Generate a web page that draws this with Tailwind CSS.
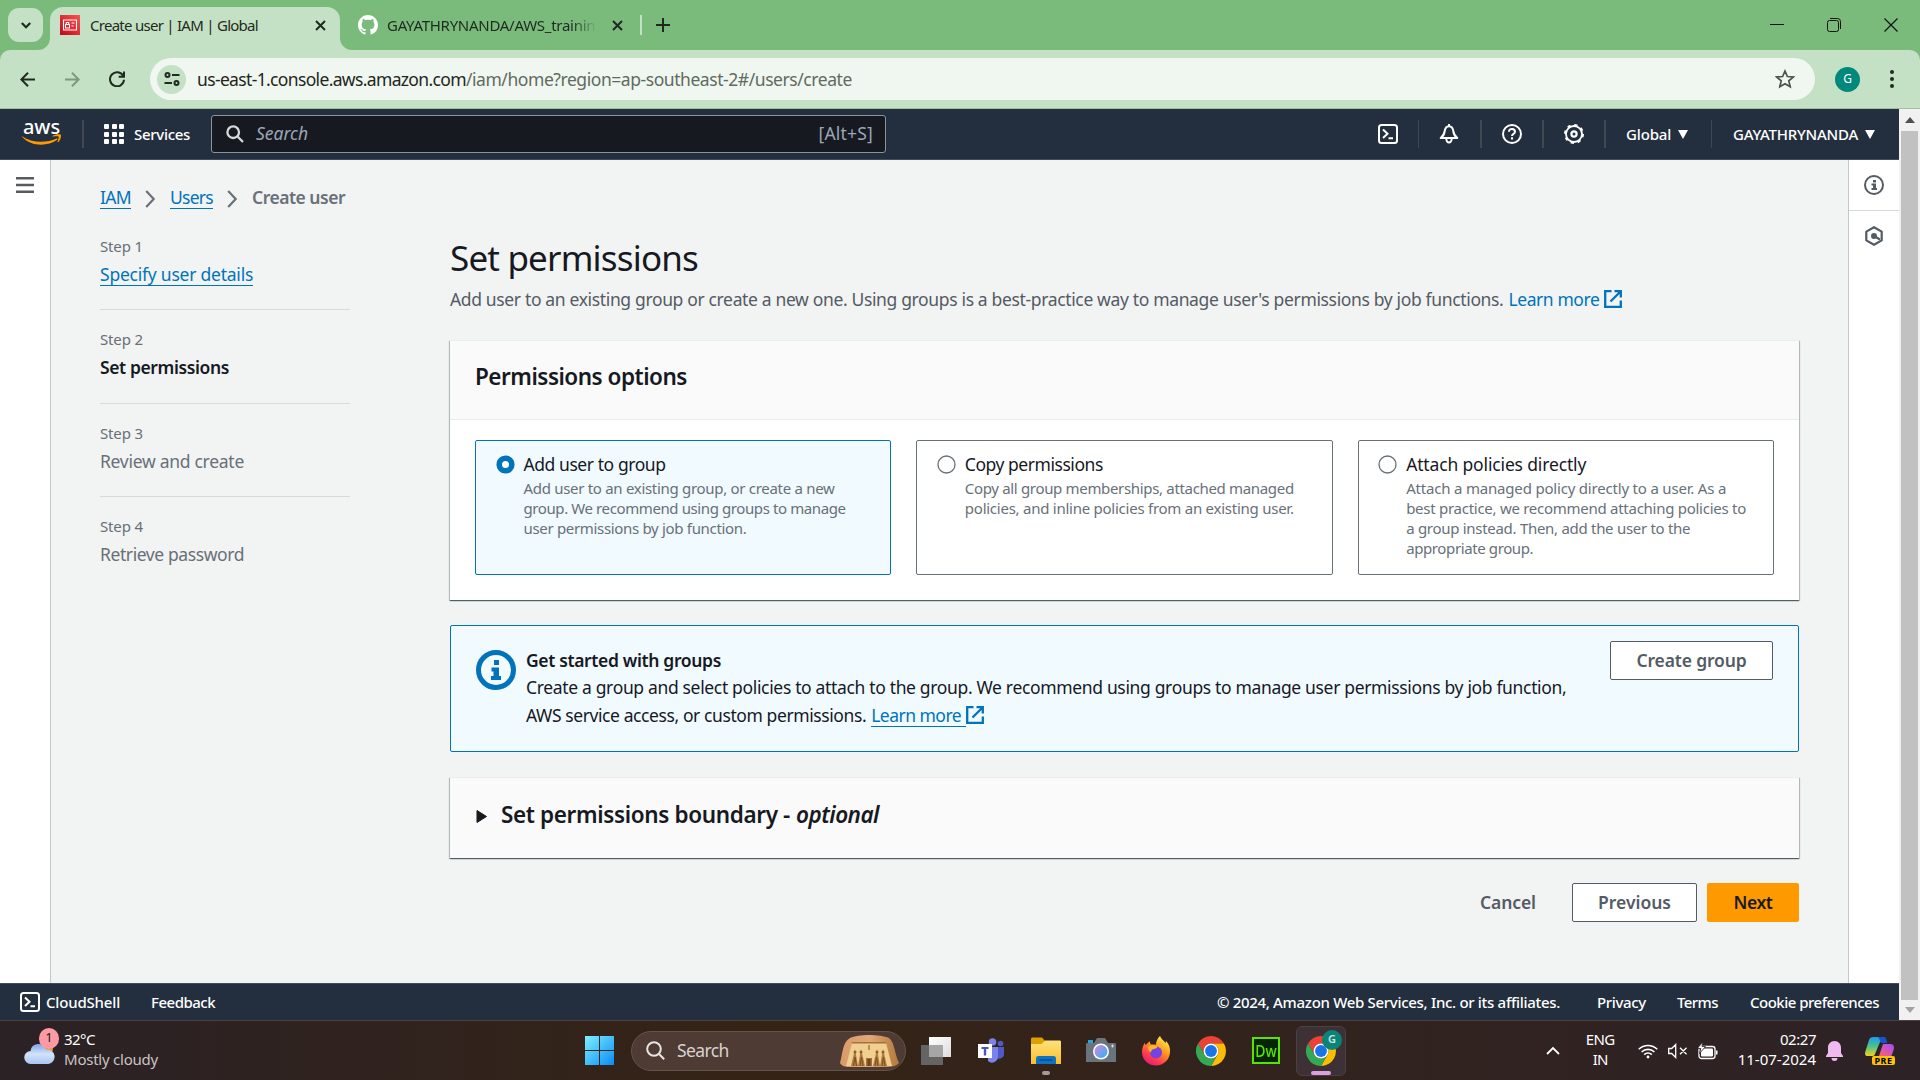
<!DOCTYPE html>
<html lang="en">
<head>
<meta charset="utf-8">
<title>Create user | IAM | Global</title>
<script src="https://cdn.jsdelivr.net/npm/@tailwindcss/browser@4"></script>
</head>
<body class="w-[1920px] h-[1080px] overflow-hidden flex flex-col bg-[#c5e1c5] font-['Noto_Sans','Open_Sans',sans-serif] text-[#16191f] whitespace-nowrap">

<!-- Tab strip -->
<div class="h-[50px] shrink-0 bg-[#7abb7c] flex items-end text-[#1f2a20] text-[15px]">
  <div class="w-[50px] h-[50px] relative flex items-center pl-2">
    <div class="w-[35px] h-[34px] rounded-[11px] bg-[#c5e1c5] flex items-center justify-center">
      <svg class="size-[12px]" viewBox="0 0 12 12" fill="none" stroke="#1f2a20" stroke-width="2.2"><path d="M1.8 4l4.2 4.2L10.2 4"/></svg>
    </div>
    <svg class="absolute right-0 bottom-0 size-3" viewBox="0 0 12 12"><path d="M12 0v12H0A12 12 0 0 0 12 0z" fill="#c5e1c5"/></svg>
  </div>
  <div class="w-[290px] h-[43px] rounded-t-[13px] bg-[#c5e1c5] flex items-center pl-2.5 pr-[14px] pb-[7px]">
    <svg class="size-5" viewBox="0 0 20 20"><defs><linearGradient id="iam" x1="0" y1="1" x2="1" y2="0"><stop offset="0" stop-color="#bd0816"/><stop offset="1" stop-color="#ff5252"/></linearGradient></defs><path fill="url(#iam)" d="M0 0h20v20H0z"/><g fill="none" stroke="#fff" stroke-width="1.1"><path d="M3.500 5h13v10h-13z"/><path d="M5.500 13V9.500h4V13zM6.300 9.500V7.500h2.400v2M11.500 8h3M11.500 11h2"/></g></svg>
    <span class="ml-[10px] tracking-[-0.73px]">Create user | IAM | Global</span>
    <svg class="ml-auto size-[11px]" viewBox="0 0 11 11" stroke="#1f2a20" stroke-width="2"><path d="M1 1l9 9M10 1l-9 9"/></svg>
  </div>
  <div class="h-[50px] flex items-center relative pl-[18px]">
    <svg class="absolute left-0 bottom-0 size-3" viewBox="0 0 12 12"><path d="M0 0v12h12A12 12 0 0 1 0 0z" fill="#c5e1c5"/></svg>
    <svg class="size-5" viewBox="0 0 16 16" fill="#fff"><path d="M8 0C3.580 0 0 3.580 0 8c0 3.540 2.290 6.530 5.470 7.590.4.070.55-.17.55-.38 0-.19-.010-.82-.010-1.490-2.010.37-2.530-.49-2.690-.94-.090-.23-.48-.94-.82-1.130-.28-.15-.68-.52-.010-.53.63-.010 1.080.58 1.230.82.72 1.210 1.870.87 2.330.66.070-.52.28-.87.51-1.070-1.780-.2-3.640-.89-3.640-3.950 0-.87.31-1.590.82-2.150-.080-.2-.36-1.020.080-2.120 0 0 .67-.21 2.200.82.64-.18 1.320-.27 2-.27s1.360.090 2 .27c1.530-1.040 2.200-.82 2.200-.82.44 1.100.16 1.920.080 2.120.51.56.82 1.270.82 2.150 0 3.070-1.870 3.750-3.650 3.950.29.25.54.73.54 1.480 0 1.070-.010 1.930-.010 2.200 0 .21.15.46.55.38A8.010 8.010 0 0 0 16 8c0-4.420-3.580-8-8-8z"/></svg>
    <div class="ml-[9px] w-[210px] overflow-hidden tracking-[-0.27px] [mask-image:linear-gradient(to_right,#000_88%,transparent)]">GAYATHRYNANDA/AWS_training</div>
    <svg class="ml-[15px] size-[11px]" viewBox="0 0 11 11" stroke="#1f2a20" stroke-width="2"><path d="M1 1l9 9M10 1l-9 9"/></svg>
    <div class="ml-[17px] w-[2px] h-5 bg-[#c5e1c5]"></div>
    <svg class="ml-[14px] size-[14px]" viewBox="0 0 14 14" stroke="#1f2a20" stroke-width="2"><path d="M7 0v14M0 7h14"/></svg>
  </div>
  <div class="ml-auto h-[50px] flex items-center gap-[43px] pr-[22px]">
    <svg class="size-[14px]" viewBox="0 0 14 14" stroke="#111"><path d="M0 6.500h14"/></svg>
    <svg class="size-[14px]" viewBox="0 0 14 14" fill="none" stroke="#111"><rect x=".5" y="2.500" width="11" height="11" rx="2"/><path d="M3 .5h7.500a3 3 0 0 1 3 3V11"/></svg>
    <svg class="size-[14px]" viewBox="0 0 14 14" stroke="#111" stroke-width="1.200"><path d="M.5.5l13 13M13.500.5l-13 13"/></svg>
  </div>
</div>

<!-- Address bar -->
<div class="h-[59px] shrink-0 bg-[#7abb7c]">
<div class="h-full rounded-t-[10px] border-b border-[#9fbfa0] bg-[#c5e1c5] flex items-center pl-5">
  <svg class="size-[15px]" viewBox="0 0 15 15" fill="none" stroke="#1f2a20" stroke-width="2"><path d="M15 7.500H1.500M8 .8L1.300 7.500 8 14.200"/></svg>
  <svg class="ml-[30px] size-[15px]" viewBox="0 0 15 15" fill="none" stroke="#7f9780" stroke-width="2"><path d="M0 7.500h13.500M7 .8l6.700 6.700L7 14.200"/></svg>
  <svg class="ml-[29px] size-4" viewBox="0 0 16 16" fill="none" stroke="#1f2a20" stroke-width="2"><path d="M14.200 5A7 7 0 1 0 15 8.800"/><path d="M15 .5v5.300H9.700"/></svg>
  <div class="ml-[25px] w-[1665px] h-[42px] rounded-full bg-[#f0f7f0] flex items-center pl-[7px] pr-[20px]">
    <div class="size-[29px] rounded-full bg-[#c5e1c5] flex items-center justify-center">
      <svg class="size-4" viewBox="0 0 16 16" fill="none" stroke="#1f2a20" stroke-width="2"><circle cx="3.500" cy="4" r="2"/><path d="M8 4h7.500M.5 12H8"/><circle cx="12.500" cy="12" r="2"/></svg>
    </div>
    <div class="ml-[11px] text-[17.5px] text-[#1f2620]"><span class="tracking-[-0.65px]">us-east-1.console.aws.amazon.com</span><span class="text-[#5f6b60] tracking-[-0.44px]">/iam/home?region=ap-southeast-2#/users/create</span></div>
    <svg class="ml-auto size-5" viewBox="0 0 20 20" fill="none" stroke="#4a544b" stroke-width="1.700"><path d="M10 2l2.400 5.500 6 .5-4.600 3.900 1.400 5.900L10 14.700l-5.200 3.100 1.400-5.900L1.600 8l6-.5z"/></svg>
  </div>
  <div class="ml-[20px] size-[25px] rounded-full bg-[#00897b] text-white text-[12px] flex items-center justify-center">G</div>
  <svg class="ml-[30px] w-1 h-[18px]" viewBox="0 0 4 18" fill="#1f2a20"><circle cx="2" cy="2" r="2"/><circle cx="2" cy="9" r="2"/><circle cx="2" cy="16" r="2"/></svg>
</div>
</div>

<div class="h-[911px] shrink-0 flex">
<div class="w-[1899px] flex flex-col">

  <!-- AWS navigation -->
  <div class="h-[51px] shrink-0 bg-[#232f3e] border-b border-[#414d5c] flex items-center pl-[22px] text-white text-[15px] font-medium">
    <div class="w-10 h-[29px] relative">
      <span class="absolute left-[1px] -top-[7px] text-[20px] leading-[28px] font-medium tracking-[-0.1px]">aws</span>
      <svg class="absolute left-0 top-[14px] w-10 h-3" viewBox="0 0 40 12" fill="#ff9900"><path d="M0 2.200c10 7 24 7 34.500 2.300 1-.3 1.500.6.700 1.300C25 13 9 12.500.2 3 0 2.700-.2 2.200 0 2.200z"/><path d="M30.500 2c2-1.800 7.500-2.200 8.300-1.300.8 1-.3 6-2.800 7.500-.4.200-.8 0-.6-.5.600-1.300 1.700-4.300 1.200-5-.5-.6-3.600-.3-5.500-.1-.6 0-.9-.3-.6-.6z"/></svg>
    </div>
    <div class="ml-5 w-[2px] h-7 bg-[#414750]"></div>
    <div class="ml-5 grid grid-cols-3 gap-x-[2.5px] gap-y-[2.5px] w-5">
      <i class="size-[5px] rounded-[1px] bg-white"></i><i class="size-[5px] rounded-[1px] bg-white"></i><i class="size-[5px] rounded-[1px] bg-white"></i><i class="size-[5px] rounded-[1px] bg-white"></i><i class="size-[5px] rounded-[1px] bg-white"></i><i class="size-[5px] rounded-[1px] bg-white"></i><i class="size-[5px] rounded-[1px] bg-white"></i><i class="size-[5px] rounded-[1px] bg-white"></i><i class="size-[5px] rounded-[1px] bg-white"></i>
    </div>
    <div class="ml-[10px] w-[77px] tracking-[-0.3px]">Services</div>
    <div class="w-[675px] h-[38px] rounded-[3px] border border-[#8c9596] bg-[#161a20] flex items-center pl-[14px] pr-3 pb-px text-[17.5px] font-normal text-[#9ba7b6]">
      <svg class="size-[18px]" viewBox="0 0 18 18" fill="none" stroke="#d5dbdb" stroke-width="2.300"><circle cx="7.200" cy="7.200" r="5.800"/><path d="M11.300 11.300l5.700 5.700"/></svg>
      <span class="ml-3 italic">Search</span>
      <span class="ml-auto tracking-[0.2px]">[Alt+S]</span>
    </div>
    <div class="ml-auto flex items-center">
      <svg class="size-5" viewBox="0 0 20 20" fill="none" stroke="#fff" stroke-width="2"><rect x="1" y="1" width="18" height="18" rx="2.500"/><path d="M5 5.500l4.500 4.300L5 14M10.500 14.300H15"/></svg>
      <div class="ml-5 mr-5 w-px h-7 bg-[#414750]"></div>
      <svg class="size-5" viewBox="0 0 20 20" fill="none" stroke="#fff" stroke-width="2"><path d="M10 2.200C7.200 2.200 6 4.500 5.600 7.500c-.4 3-1.500 4.700-3.900 6.600h16.600c-2.400-1.900-3.500-3.600-3.900-6.600-.4-3-1.600-5.300-4.400-5.300zM10 0v2.500M7.300 14.500a2.700 4 0 0 0 5.400 0" stroke-linejoin="round"/></svg>
      <div class="ml-[21px] mr-5 w-[2px] h-7 bg-[#414750]"></div>
      <svg class="size-5" viewBox="0 0 20 20" fill="none" stroke="#fff" stroke-width="2"><circle cx="10" cy="10" r="9"/><path d="M7 7.700c0-3.800 6-3.600 6 0 0 2.300-3 2-3 4.300M10 13.200v2.200"/></svg>
      <div class="ml-5 mr-5 w-[2px] h-7 bg-[#414750]"></div>
      <svg class="size-5" viewBox="0 0 20 20" fill="none" stroke="#fff" stroke-width="2.200"><circle cx="10" cy="10" r="8" stroke-width="1.800"/><circle cx="10" cy="10" r="8.900" stroke-dasharray="3.200 3.790"/><circle cx="10" cy="10" r="2.600"/></svg>
      <div class="ml-5 mr-5 w-[2px] h-7 bg-[#414750]"></div>
      <span class="tracking-[-0.18px]">Global</span>
      <svg class="ml-[7px] w-[10px] h-[9px]" viewBox="0 0 10 9"><path fill="#fff" d="M0 0h10L5 9z"/></svg>
      <div class="ml-[23px] mr-[21px] w-px h-7 bg-[#414750]"></div>
      <span class="tracking-[-0.23px]">GAYATHRYNANDA</span>
      <svg class="ml-[7px] mr-[24px] w-[10px] h-[9px]" viewBox="0 0 10 9"><path fill="#fff" d="M0 0h10L5 9z"/></svg>
    </div>
  </div>

  <!-- Console body -->
  <div class="flex-1 flex min-h-0">
    <aside class="w-[51px] shrink-0 bg-white border-r border-[#c3c9c9] pl-4 pt-[17px]">
      <svg class="w-[18px] h-4" viewBox="0 0 18 16" fill="#545b64"><path d="M0 0h18v2.500H0zM0 6.700h18v2.500H0zM0 13.400h18v2.500H0z"/></svg>
    </aside>

    <main class="flex-1 bg-[#f2f3f3] pl-[49px] pr-[48px] text-[17.5px]">
      <nav class="h-[34px] mt-[20px] flex items-center">
        <a class="text-[#0073bb] border-b border-[#0073bb] leading-[22px] tracking-[-0.67px]">IAM</a>
        <svg class="mx-[14px] mt-1 w-[11px] h-[18px]" viewBox="0 0 11 18" fill="none" stroke="#687078" stroke-width="2.200"><path d="M1.200 1l7.500 8-7.500 8"/></svg>
        <a class="text-[#0073bb] border-b border-[#0073bb] leading-[22px] tracking-[-0.73px]">Users</a>
        <svg class="mx-[14px] mt-1 w-[11px] h-[18px]" viewBox="0 0 11 18" fill="none" stroke="#687078" stroke-width="2.200"><path d="M1.200 1l7.500 8-7.500 8"/></svg>
        <span class="font-semibold text-[#687078] tracking-[-0.49px]">Create user</span>
      </nav>

      <div class="flex">
        <ol class="w-[250px] mt-[20px] shrink-0 text-[#687078]">
          <li class="h-[76px] border-b border-[#d5dbdb]"><div class="text-[15px] leading-[25px] tracking-[-0.14px]">Step 1</div><div class="mt-[3px] leading-[25px]"><a class="text-[#0073bb] border-b border-[#0073bb] leading-[22px] inline-block tracking-[-0.23px]">Specify user details</a></div></li>
          <li class="h-[76.5px] mt-[17px] border-b border-[#d5dbdb]"><div class="text-[15px] leading-[25px] tracking-[-0.14px]">Step 2</div><div class="mt-[3px] leading-[25px] font-semibold text-[#16191f] tracking-[-0.39px]">Set permissions</div></li>
          <li class="h-[76.5px] mt-[17px] border-b border-[#d5dbdb]"><div class="text-[15px] leading-[25px] tracking-[-0.14px]">Step 3</div><div class="mt-[3px] leading-[25px] tracking-[-0.28px]">Review and create</div></li>
          <li class="h-[76px] mt-[17px]"><div class="text-[15px] leading-[25px] tracking-[-0.14px]">Step 4</div><div class="mt-[3px] leading-[25px] tracking-[-0.41px]">Retrieve password</div></li>
        </ol>

        <section class="ml-[100px] w-[1349px]">
          <h1 class="mt-[21px] h-[45px] text-[35px] leading-[45px] tracking-[-0.82px]">Set permissions</h1>
          <p class="mt-[5px] h-[28px] flex items-center text-[#545b64]"><span class="tracking-[-0.35px]">Add user to an existing group or create a new one. Using groups is a best-practice way to manage user's permissions by job functions.</span><a class="ml-[5px] text-[#0073bb] flex items-center tracking-[-0.42px]">Learn more<svg class="ml-[5px] size-[18px]" viewBox="0 0 18 18" fill="none" stroke="#0073bb" stroke-width="2.300"><path d="M7.500 1.200H1.200v15.600h15.600v-6.300M10.500 1.200h6.300v6.300M16.300 1.700L6.500 11.500"/></svg></a></p>

          <!-- Permission option tiles -->
          <div class="mt-[27px] h-[260px] bg-white shadow-[0_1px_1px_0_rgba(0,28,36,.5),1px_1px_1px_0_rgba(0,28,36,.2),-1px_1px_1px_0_rgba(0,28,36,.2)] border-t border-[#eaeded]">
            <div class="h-[79px] bg-[#fafafa] border-b border-[#eaeded] flex items-center pl-[25px] pb-[6px]"><h2 class="text-[22.500px] font-semibold tracking-[-0.49px]">Permissions options</h2></div>
            <div class="px-[25px] pt-5 grid grid-cols-3 gap-[25px]">
              <div class="h-[135px] rounded-[2px] border border-[#0073bb] bg-[#f1faff] pl-[19.500px] pt-[11px] flex">
                <svg class="mt-[3px] size-[19px] shrink-0" viewBox="0 0 19 19"><circle cx="9.500" cy="9.500" r="6.300" fill="#fff" stroke="#0073bb" stroke-width="5.600"/></svg>
                <div class="ml-[9px]"><div class="leading-[24px] tracking-[-0.43px]">Add user to group</div><div class="mt-[2px] text-[15px] leading-5 text-[#687078]"><span class="tracking-[-0.3px]">Add user to an existing group, or create a new</span><br><span class="tracking-[-0.4px]">group. We recommend using groups to manage</span><br><span class="tracking-[-0.32px]">user permissions by job function.</span></div></div>
              </div>
              <div class="h-[135px] rounded-[2px] border border-[#687078] bg-white pl-[19.500px] pt-[11px] flex">
                <svg class="mt-[3px] size-[19px] shrink-0" viewBox="0 0 19 19"><circle cx="9.500" cy="9.500" r="8.500" fill="#fff" stroke="#687078" stroke-width="1.300"/></svg>
                <div class="ml-[9px]"><div class="leading-[24px] tracking-[-0.46px]">Copy permissions</div><div class="mt-[2px] text-[15px] leading-5 text-[#687078]"><span class="tracking-[-0.33px]">Copy all group memberships, attached managed</span><br><span class="tracking-[-0.25px]">policies, and inline policies from an existing user.</span></div></div>
              </div>
              <div class="h-[135px] rounded-[2px] border border-[#687078] bg-white pl-[19.500px] pt-[11px] flex">
                <svg class="mt-[3px] size-[19px] shrink-0" viewBox="0 0 19 19"><circle cx="9.500" cy="9.500" r="8.500" fill="#fff" stroke="#687078" stroke-width="1.300"/></svg>
                <div class="ml-[9px]"><div class="leading-[24px] tracking-[-0.15px]">Attach policies directly</div><div class="mt-[2px] text-[15px] leading-5 text-[#687078]"><span class="tracking-[-0.19px]">Attach a managed policy directly to a user. As a</span><br><span class="tracking-[-0.27px]">best practice, we recommend attaching policies to</span><br><span class="tracking-[-0.29px]">a group instead. Then, add the user to the</span><br><span class="tracking-[-0.39px]">appropriate group.</span></div></div>
              </div>
            </div>
          </div>

          <!-- Getting started notice -->
          <div class="mt-[25px] h-[127px] rounded-[2px] border border-[#0073bb] bg-[#f1faff] flex pl-[25px] pr-[25px] pt-[15px]">
            <svg class="mt-[9px] size-10 shrink-0" viewBox="0 0 40 40"><circle cx="20" cy="20" r="17.500" fill="none" stroke="#0073bb" stroke-width="5"/><path fill="#0073bb" d="M18 10h5v5h-5zM15.500 17.500H23V26h2v4H15v-4h2.500v-4.500h-2z"/></svg>
            <div class="ml-[10px] pt-[5.500px] leading-[27.500px]">
              <div class="font-semibold tracking-[-0.35px]">Get started with groups</div>
              <div class="tracking-[-0.34px]">Create a group and select policies to attach to the group. We recommend using groups to manage user permissions by job function,</div>
              <div class="flex items-center tracking-[-0.41px]">AWS service access, or custom permissions.<a class="ml-[5px] text-[#0073bb] flex items-center tracking-[-0.52px]"><span class="leading-[22px] border-b border-[#0073bb] pr-[5px]">Learn more</span><svg class="size-[18px]" viewBox="0 0 18 18" fill="none" stroke="#0073bb" stroke-width="2.300"><path d="M7.500 1.200H1.200v15.600h15.600v-6.300M10.500 1.200h6.300v6.300M16.300 1.700L6.500 11.500"/></svg></a></div>
            </div>
            <button class="ml-auto w-[163px] h-[39px] rounded-[2px] border border-[#545b64] bg-white font-semibold text-[#545b64] tracking-[-0.16px]">Create group</button>
          </div>

          <!-- Permissions boundary -->
          <div class="mt-[25px] h-[81px] bg-[#fafafa] border-t border-[#eaeded] shadow-[0_1px_1px_0_rgba(0,28,36,.5),1px_1px_1px_0_rgba(0,28,36,.2),-1px_1px_1px_0_rgba(0,28,36,.2)] flex items-center pl-[26px] pb-[6px] text-[22.500px] font-semibold">
            <svg class="mt-[2px] w-[11px] h-[13px]" viewBox="0 0 11 13"><path d="M1 .5l9.500 6L1 12.500z" fill="#16191f" stroke="#16191f" stroke-linejoin="round"/></svg>
            <span class="ml-[14px] tracking-[-0.36px]">Set permissions boundary -</span><span class="ml-[6px] italic tracking-[-0.5px]">optional</span>
          </div>

          <div class="mt-[25px] flex justify-end items-center font-semibold text-[#545b64]">
            <span class="tracking-[-0.09px]">Cancel</span>
            <button class="ml-[36px] w-[125px] h-[39px] rounded-[2px] border border-[#545b64] bg-white">Previous</button>
            <button class="ml-[10px] w-[92px] h-[39px] rounded-[2px] bg-[#ff9900] text-[#16191f] tracking-[-0.42px]">Next</button>
          </div>
        </section>
      </div>
    </main>

    <aside class="w-[51px] shrink-0 bg-white border-l border-[#c3c9c9] flex flex-col items-center">
      <div class="h-[51px] w-full border-b border-[#d5dbdb] flex items-center justify-center">
        <svg class="size-5" viewBox="0 0 20 20"><circle cx="10" cy="10" r="9" fill="none" stroke="#545b64" stroke-width="2"/><path fill="#545b64" d="M9 5h3v2.500H9zM7.500 8.500H12V13h1v2H7.500v-2H9v-2.500H7.500z"/></svg>
      </div>
      <div class="h-[50px] flex items-center justify-center">
        <svg class="size-5" viewBox="0 0 20 20" fill="none" stroke="#545b64" stroke-width="2.200"><path d="M10 1.200l7.700 4.400v8.800L10 18.800l-7.700-4.400V5.600z" stroke-linejoin="round"/><circle cx="10" cy="10" r="1.900" fill="#545b64"/><path d="M10 10l6 3.500"/></svg>
      </div>
    </aside>
  </div>

  <!-- Console footer -->
  <footer class="h-[37px] shrink-0 bg-[#232f3e] border-t border-[#414d5c] flex items-center pl-5 pr-5 text-white text-[15px] font-medium">
    <svg class="size-5" viewBox="0 0 20 20" fill="none" stroke="#fff" stroke-width="2"><rect x="1" y="1" width="18" height="18" rx="2.500"/><path d="M5 5.500l4.500 4.300L5 14M10.500 14.300H15"/></svg>
    <span class="ml-[6px] tracking-[-0.18px]">CloudShell</span>
    <span class="ml-[31px] tracking-[-0.51px]">Feedback</span>
    <span class="ml-auto tracking-[-0.31px]">© 2024, Amazon Web Services, Inc. or its affiliates.</span>
    <span class="ml-[37px] tracking-[-0.33px]">Privacy</span>
    <span class="ml-[31px] tracking-[-0.57px]">Terms</span>
    <span class="ml-[32px] tracking-[-0.5px]">Cookie preferences</span>
  </footer>
</div>

<!-- Scrollbar -->
<div class="w-[21px] bg-[#f1f1f1] flex flex-col items-center">
  <svg class="mt-2 mb-[8px] w-[10px] h-[6px]" viewBox="0 0 10 6"><path fill="#505050" d="M5 0l5 6H0z"/></svg>
  <div class="w-[17px] h-[869px] bg-[#c1c1c1]"></div>
  <svg class="mt-[7px] w-[10px] h-[6px]" viewBox="0 0 10 6"><path fill="#a3a3a3" d="M0 0h10L5 6z"/></svg>
</div>
</div>

<!-- Windows taskbar -->
<div class="h-[60px] shrink-0 border-t border-[#4b423f] bg-linear-to-r from-[#2b2226] via-[#352315] via-40% to-[#2d2226] flex items-center text-white text-[15px]">
  <div class="w-[585px] flex items-center pl-6">
    <div class="relative w-[40px] h-10">
      <svg class="absolute left-0 top-[9px] w-8 h-6" viewBox="0 0 32 24"><defs><linearGradient id="cl" x1="0" y1="0" x2="0" y2="1"><stop offset="0" stop-color="#7ea6e8"/><stop offset=".5" stop-color="#d3e3fa"/><stop offset="1" stop-color="#a9c5f2"/></linearGradient></defs><circle cx="23" cy="9" r="6" fill="#ff8c1a"/><path fill="url(#cl)" d="M7 24a6.500 6.500 0 0 1-.5-13A8 8 0 0 1 22 9.500a6.500 6.500 0 0 1 2.500 14.500z"/></svg>
      <div class="absolute left-[15px] -top-[3px] w-5 h-[21px] rounded-full bg-[#ff99a4] text-[#1a1a1a] text-[13px] flex items-center justify-center">1</div>
    </div>
    <div class="leading-5 pb-1"><div class="tracking-[-0.52px]">32°C</div><div class="text-[#c9c3c4] tracking-[-0.23px]">Mostly cloudy</div></div>
  </div>
  <svg class="w-[29px] h-[29px]" viewBox="0 0 29 29"><defs><linearGradient id="win" x1="0" y1="0" x2="1" y2="1"><stop offset="0" stop-color="#7df0ff"/><stop offset="1" stop-color="#0a8cf5"/></linearGradient></defs><path fill="url(#win)" d="M0 0h14v14H0zM15 0h14v14H15zM0 15h14v14H0zM15 15h14v14H15z"/></svg>
  <div class="ml-[17px] w-[275px] h-10 rounded-full bg-[#4e3c34] border border-[#64534b] flex items-center pl-[14px] pr-[5px] text-[17.5px] text-[#d8d2cf]">
    <svg class="size-[19px]" viewBox="0 0 19 19" fill="none" stroke="#e8e4e2" stroke-width="2"><circle cx="8" cy="8" r="6.800"/><path d="M13 13l5.200 5.200"/></svg>
    <span class="ml-[12px] tracking-[-0.6px]">Search</span>
    <svg class="ml-auto w-[61px] h-8" viewBox="0 0 61 32"><defs><linearGradient id="tm" x1="0" y1="0" x2="1" y2="0"><stop offset="0" stop-color="#d99a68"/><stop offset=".5" stop-color="#e0a878"/><stop offset="1" stop-color="#b37a3a"/></linearGradient></defs><path fill="url(#tm)" d="M1 28C4 18 3 8 11 3c8-4 30-4 39 0 6 5 5 14 10 25-3 4-10 4-14 4H12C8 32 3 32 1 28z"/><path fill="#f0cf90" d="M13 8h34l6 23H7z"/><path fill="#a5713a" d="M13 7h34l.5 1.500h-35zM27 23h6v8h-6z"/><path fill="#6e4520" d="M28.500 24h3v7h-3z"/><path d="M12 31l4-17 3 17zM19 31l3-17 4 17zM34 31l4-17 3 17zM41 31l3-17 4 17z" fill="#b07c40"/><path d="M14.500 31l1.500-9 1.500 9M21 31l1.500-9 1.500 9M36 31l1.500-9 1.500 9M43 31l1.500-9 1.500 9M30 10v5" stroke="#7b4e22" fill="none"/><g fill="#8f5f2c"><circle cx="16" cy="17" r="1.500"/><circle cx="22" cy="17" r="1.500"/><circle cx="38" cy="17" r="1.500"/><circle cx="44" cy="17" r="1.500"/></g></svg>
  </div>
  <!-- Task view -->
  <svg class="ml-[15px] size-[30px]" viewBox="0 0 30 30"><defs><linearGradient id="tv" x1="0" y1="0" x2="1" y2="1"><stop offset="0" stop-color="#fff"/><stop offset="1" stop-color="#dcdcdc"/></linearGradient></defs><path fill="#646464" d="M0 9h22v20H0z"/><path fill="url(#tv)" d="M8 1h22v20H8z"/><path fill="#a6a6a6" d="M8 9h14v12H8z"/></svg>
  <!-- Teams -->
  <svg class="ml-[27px] size-[26px]" viewBox="0 0 26 26"><circle cx="14.500" cy="4" r="3.800" fill="#7b83eb"/><circle cx="22.500" cy="5.500" r="2.800" fill="#5059c9"/><path d="M18 9h8v8a4.500 4.500 0 0 1-8 2z" fill="#5059c9"/><path d="M10 9h10v9a6 6 0 0 1-10 5z" fill="#7b83eb"/><path fill="#fff" d="M0 6h14v14H0z"/><path fill="#4b53bc" d="M3.500 9h7v2H8.200v6.500H5.800V11H3.500z"/></svg>
  <!-- File explorer -->
  <div class="ml-[27px] relative w-[30px] h-[30px]">
    <svg class="size-[30px]" viewBox="0 0 30 30"><defs><linearGradient id="fl" x1="0" y1="0" x2="0" y2="1"><stop offset="0" stop-color="#ffe27a"/><stop offset="1" stop-color="#fbbd2c"/></linearGradient></defs><path fill="#e09f00" d="M0 3c0-1 .5-1.500 1.500-1.500H11L14 5l-3 4H0z"/><path fill="url(#fl)" d="M0 8h10.500L14 4.500h14.500c1 0 1.500.5 1.500 1.500v22H0z"/><path fill="#0f73c4" d="M5 28v-5.500A2.500 2.500 0 0 1 7.500 20h15a2.500 2.500 0 0 1 2.500 2.500V28z"/><path stroke="#0a4c8f" stroke-width="1.500" d="M8.500 24h13"/></svg>
    <div class="absolute left-[11px] top-[35px] w-2 h-1 rounded-full bg-[#a39b96]"></div>
  </div>
  <!-- Camera -->
  <svg class="ml-[25px] size-[30px]" viewBox="0 0 30 30"><defs><linearGradient id="cm" x1="0" y1="0" x2="1" y2="1"><stop offset=".2" stop-color="#b78de8"/><stop offset="1" stop-color="#26b5f0"/></linearGradient></defs><path fill="#22a7e0" d="M2 4h5v5H2z"/><path fill="#6a747c" d="M1.500 7H8l3-5h8l3 5h6.500c1 0 1.500.5 1.500 1.500V26H0V8.500C0 7.500.5 7 1.500 7z"/><circle cx="15" cy="15.500" r="8" fill="#fff"/><circle cx="15" cy="15.500" r="6.500" fill="url(#cm)"/><path stroke="#d8dde0" d="M26.500 8.500v3M25 10h3"/></svg>
  <!-- Firefox -->
  <svg class="ml-[25px] size-[30px]" viewBox="0 0 30 30"><defs><linearGradient id="ff" x1=".8" y1="0" x2=".2" y2="1"><stop offset="0" stop-color="#fff44f"/><stop offset=".4" stop-color="#ff9a1f"/><stop offset=".75" stop-color="#ff3750"/><stop offset="1" stop-color="#e31587"/></linearGradient></defs><path fill="url(#ff)" d="M19 0c1 3 4 4.500 5.500 7 .5-.5.500-1.500.3-2.200C28 8 29.500 12 29 16.500 28.300 24 22.500 29.500 15 29.500 7 29.500 1 23.500 1 16c0-4 1.200-7 3-9.300 0 1 .3 2 .8 2.600C6 7.500 7.500 6 9 5.500c0 1.500.3 2.500 1 3 2-.2 4 0 5 .3C15 5.500 16.500 2 19 0z"/><circle cx="15" cy="16.500" r="6" fill="#7542e5"/><path fill="#ffb32b" d="M7 11c3-2.500 7-2 9.500 0-1 1.500-3 2-4.500 2.200-1.500.5-2 2-1.800 3.300C8 15.500 7 13 7 11z"/></svg>
  <!-- Chrome -->
  <svg class="ml-[25px] size-[30px]" viewBox="0 0 48 48"><path fill="#ea4335" d="M24 12h20.780A24 24 0 0 0 3.215 12l10.390 18A12 12 0 0 1 24 12z"/><path fill="#fbbc04" d="M34.390 30L24 48A24 24 0 0 0 44.780 12H24a12 12 0 0 1 10.390 18z"/><path fill="#34a853" d="M13.610 30L3.215 12A24 24 0 0 0 24 48l10.390-18a12 12 0 0 1-20.780 0z"/><circle cx="24" cy="24" r="12" fill="#fff"/><circle cx="24" cy="24" r="9.500" fill="#1a73e8"/></svg>
  <!-- Dreamweaver -->
  <div class="ml-[26px] w-7 h-[27px] border-2 border-[#54e600] bg-[#072401] text-[#54e600] text-[17px] font-medium leading-none flex items-center justify-center pb-px"><span class="scale-x-[.82]">Dw</span></div>
  <div class="ml-4 relative w-[50px] h-[50px] rounded-[6px] bg-[#3d3136] border border-[#4a3f42] flex items-center justify-center">
    <svg class="size-[30px]" viewBox="0 0 48 48"><path fill="#ea4335" d="M24 12h20.780A24 24 0 0 0 3.215 12l10.390 18A12 12 0 0 1 24 12z"/><path fill="#fbbc04" d="M34.390 30L24 48A24 24 0 0 0 44.780 12H24a12 12 0 0 1 10.390 18z"/><path fill="#34a853" d="M13.610 30L3.215 12A24 24 0 0 0 24 48l10.390-18a12 12 0 0 1-20.780 0z"/><circle cx="24" cy="24" r="12" fill="#fff"/><circle cx="24" cy="24" r="9.500" fill="#1a73e8"/></svg>
    <div class="absolute left-[25px] top-[3px] size-5 rounded-full bg-[#0b8376] text-[11px] font-semibold text-[#cfe8e4] flex items-center justify-center">G</div>
    <div class="absolute left-[14px] top-[44px] w-5 h-1 rounded-full bg-[#dc9fe0]"></div>
  </div>
  <!-- System tray -->
  <div class="ml-auto flex items-center pr-[25px]">
    <svg class="w-[14px] h-[9px]" viewBox="0 0 14 9" fill="none" stroke="#fff" stroke-width="1.800"><path d="M1 8l6-6 6 6"/></svg>
    <div class="ml-[26px] pb-[3px] text-center leading-5"><div class="tracking-[-0.56px]">ENG</div><div class="tracking-[-0.75px]">IN</div></div>
    <svg class="ml-[23px] w-5 h-4" viewBox="0 0 20 16" fill="none" stroke="#fff" stroke-width="1.600"><path d="M.8 6.300a13 13 0 0 1 18.400 0M3.600 9a9 9 0 0 1 12.800 0M6.200 11.600a5.400 5.400 0 0 1 7.600 0"/><circle cx="10" cy="14" r="1.400" fill="#fff" stroke="none"/></svg>
    <svg class="ml-[10px] w-5 h-4" viewBox="0 0 20 16" fill="none" stroke="#fff" stroke-width="1.300"><path d="M.7 5.500v5h3l4 4V1.500l-4 4zM12 4.800l6.500 6.500M18.500 4.800L12 11.300"/></svg>
    <svg class="ml-[10px] w-5 h-[18px]" viewBox="0 0 20 18"><rect x="1" y="4.500" width="16" height="12" rx="2.500" fill="none" stroke="#fff" stroke-width="1.300"/><rect x="3" y="6.500" width="12" height="8" rx="1" fill="#fff"/><path d="M18 8.500h1.500v4H18z" fill="#fff"/><path d="M4.500 0L-.5 6.500h3.300L1.500 11.500 7.500 4.500H4z" fill="#fff" stroke="#2d2226" stroke-width=".8"/></svg>
    <div class="ml-[20px] pb-[4px] text-right leading-5"><div class="tracking-[-0.47px]">02:27</div><div>11-07-2024</div></div>
    <svg class="ml-[10px] w-[17px] h-5" viewBox="0 0 17 20" fill="#f0b9f0"><path d="M8.500 0C4.500 0 2 3 2 6.500V12l-2 3v1h17v-1l-2-3V6.500C15 3 12.500 0 8.500 0zM5.500 17h6a3 3 0 0 1-6 0z"/></svg>
    <div class="ml-[22px] relative w-[30px] h-[30px]">
      <svg class="size-[30px]" viewBox="0 0 30 30"><defs><linearGradient id="c1" x1="0" y1="0" x2="0" y2="1"><stop offset="0" stop-color="#1d9bf0"/><stop offset=".5" stop-color="#4cc38a"/><stop offset="1" stop-color="#f5d020"/></linearGradient><linearGradient id="c2" x1="0" y1="1" x2="1" y2="0"><stop offset="0" stop-color="#ff5f6d"/><stop offset="1" stop-color="#a64dff"/></linearGradient></defs><path fill="url(#c1)" d="M8 1h10c3 0 3 2 2 5h-5l-5 12c-.6 1.500-1 2-3 2H3c-3 0-3.500-2-2.500-5L4 4c.6-2 2-3 4-3z"/><path fill="#1554d1" d="M13 1h5c3 0 3.500 3 4.500 6H17c-2 0-2-4-4-6z"/><path fill="url(#c2)" d="M18 8h7c4 0 4.500 3 3.500 6l-2 6H14z"/></svg>
      <div class="absolute left-[7px] top-[20px] w-[23px] h-[9px] rounded-[2px] bg-[#fcc400] text-black text-[9px] leading-[9px] font-bold flex items-center justify-center tracking-[0.5px]">PRE</div>
    </div>
  </div>
</div>
</body>
</html>
